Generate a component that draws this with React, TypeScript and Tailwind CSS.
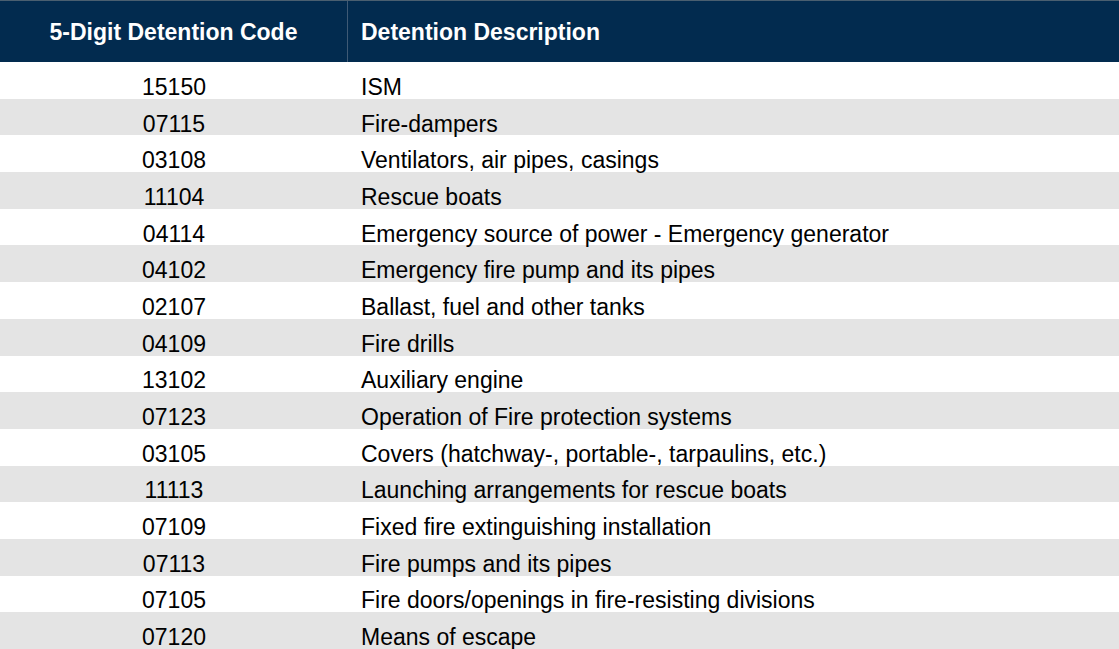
import React from 'react';

const rows: [string, string][] = [
  ['15150', 'ISM'],
  ['07115', 'Fire-dampers'],
  ['03108', 'Ventilators, air pipes, casings'],
  ['11104', 'Rescue boats'],
  ['04114', 'Emergency source of power - Emergency generator'],
  ['04102', 'Emergency fire pump and its pipes'],
  ['02107', 'Ballast, fuel and other tanks'],
  ['04109', 'Fire drills'],
  ['13102', 'Auxiliary engine'],
  ['07123', 'Operation of Fire protection systems'],
  ['03105', 'Covers (hatchway-, portable-, tarpaulins, etc.)'],
  ['11113', 'Launching arrangements for rescue boats'],
  ['07109', 'Fixed fire extinguishing installation'],
  ['07113', 'Fire pumps and its pipes'],
  ['07105', 'Fire doors/openings in fire-resisting divisions'],
  ['07120', 'Means of escape'],
];

const App: React.FC = () => {
  return (
    <div className="w-[1119px] h-[649px] overflow-hidden bg-white font-['Liberation_Sans',Arial,sans-serif] text-black">
      <div className="flex h-[62px] pt-[2px] bg-[#022b4f] border-t border-[#4a5f70] text-white font-bold text-[23px] leading-none">
        <div className="w-[348px] flex items-center justify-center border-r border-[#3f5a75] -mt-[2px]">
          <span className="pt-[2px]">5-Digit Detention Code</span>
        </div>
        <div className="flex-1 flex items-center pl-[13px]">Detention Description</div>
      </div>
      {rows.map(([code, desc], i) => (
        <div
          key={code}
          className={`flex h-[36.7px] pt-[14px] text-[23px] leading-none ${i % 2 === 1 ? 'bg-[#e4e4e4]' : 'bg-white'}`}
        >
          <div className="w-[348px] flex items-center justify-center">{code}</div>
          <div className="flex-1 flex items-center pl-[13px]">{desc}</div>
        </div>
      ))}
    </div>
  );
};

export default App;
